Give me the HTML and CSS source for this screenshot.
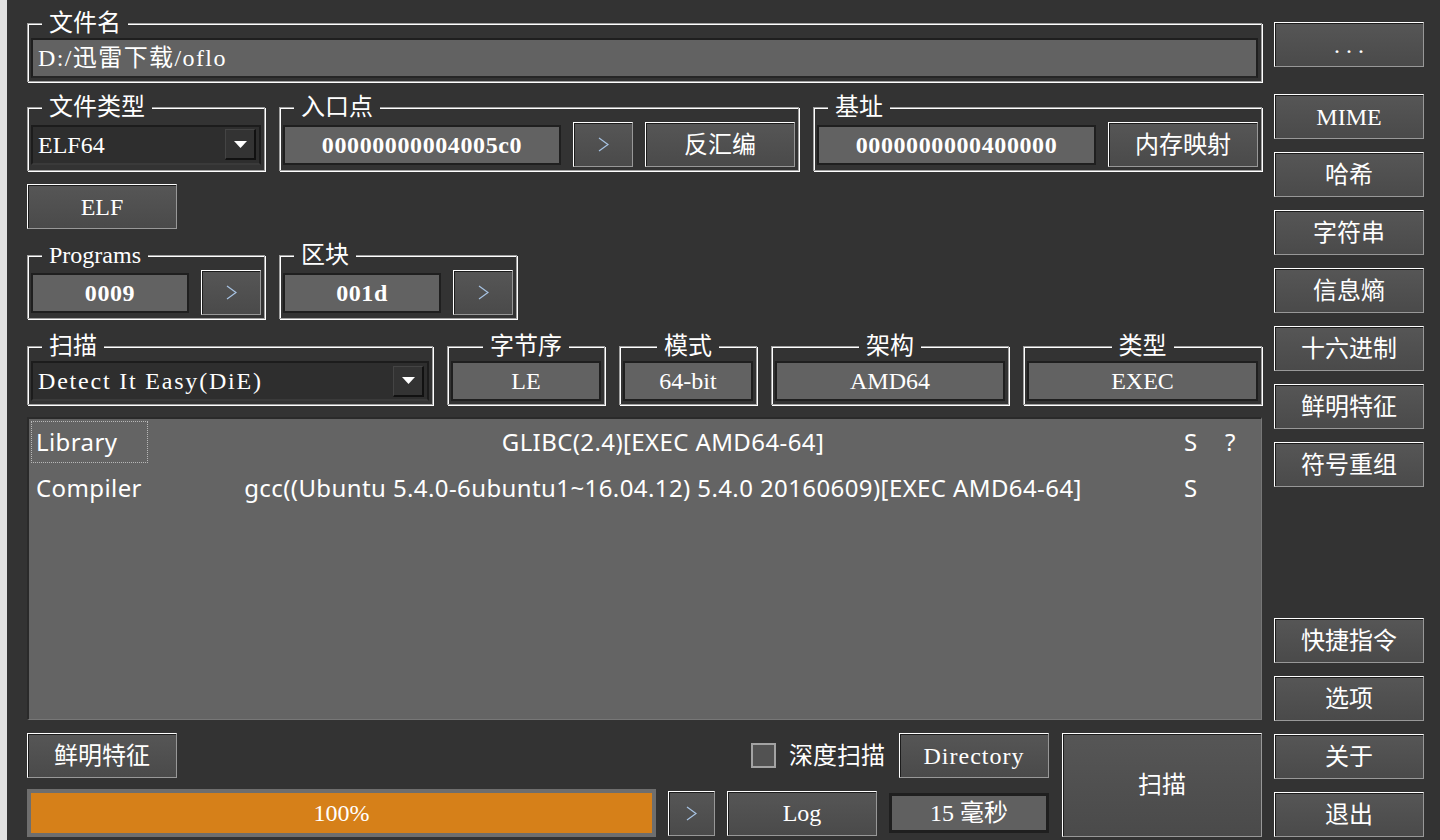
FILE: index.html
```html
<!DOCTYPE html>
<html lang="zh-CN">
<head>
    <meta charset="UTF-8">
    <meta name="viewport" content="width=device-width, initial-scale=1.0">
    <title>Detect It Easy</title>
    <link rel="stylesheet" href="styles.css">
</head>
<body>
    <div class="window">
        <div class="main">
            <div class="group group-file">
                <span class="legend">文件名</span>
                <div class="line-edit">D:/迅雷下载/oflo</div>
            </div>

            <div class="row row-first">
                <div class="group group-type">
                    <span class="legend">文件类型</span>
                    <div class="combo">
                        <span class="combo-text">ELF64</span>
                        <span class="combo-btn"><svg width="13" height="7" viewBox="0 0 13 7"><polygon points="0,0 13,0 6.5,7" fill="#fff"/></svg></span>
                    </div>
                </div>
                <div class="group group-entry">
                    <span class="legend">入口点</span>
                    <div class="field value">00000000004005c0</div>
                    <button class="btn btn-arrow"><svg width="11" height="15" viewBox="0 0 11 15"><polyline points="1,1 10,7.5 1,14" fill="none" stroke="#a8c4e4" stroke-width="1.2"/></svg></button>
                    <button class="btn">反汇编</button>
                </div>
                <div class="group group-grow">
                    <span class="legend">基址</span>
                    <div class="field value">0000000000400000</div>
                    <button class="btn">内存映射</button>
                </div>
            </div>

            <button class="btn btn-elf">ELF</button>

            <div class="row row-programs">
                <div class="group group-type">
                    <span class="legend">Programs</span>
                    <div class="field value">0009</div>
                    <button class="btn btn-arrow"><svg width="11" height="15" viewBox="0 0 11 15"><polyline points="1,1 10,7.5 1,14" fill="none" stroke="#a8c4e4" stroke-width="1.2"/></svg></button>
                </div>
                <div class="group group-type">
                    <span class="legend">区块</span>
                    <div class="field value">001d</div>
                    <button class="btn btn-arrow"><svg width="11" height="15" viewBox="0 0 11 15"><polyline points="1,1 10,7.5 1,14" fill="none" stroke="#a8c4e4" stroke-width="1.2"/></svg></button>
                </div>
            </div>

            <div class="row row-scan">
                <div class="group group-scan">
                    <span class="legend">扫描</span>
                    <div class="combo">
                        <span class="combo-text mono">Detect It Easy(DiE)</span>
                        <span class="combo-btn"><svg width="13" height="7" viewBox="0 0 13 7"><polygon points="0,0 13,0 6.5,7" fill="#fff"/></svg></span>
                    </div>
                </div>
                <div class="group group-endian centered">
                    <span class="legend">字节序</span>
                    <div class="field">LE</div>
                </div>
                <div class="group group-mode centered">
                    <span class="legend">模式</span>
                    <div class="field">64-bit</div>
                </div>
                <div class="group group-arch centered">
                    <span class="legend">架构</span>
                    <div class="field">AMD64</div>
                </div>
                <div class="group group-grow centered">
                    <span class="legend">类型</span>
                    <div class="field">EXEC</div>
                </div>
            </div>

            <div class="list">
                <div class="list-row">
                    <div class="cell cell-type focused">Library</div>
                    <div class="cell cell-name">GLIBC(2.4)[EXEC AMD64-64]</div>
                    <div class="cell cell-s">S</div>
                    <div class="cell cell-q">?</div>
                </div>
                <div class="list-row">
                    <div class="cell cell-type">Compiler</div>
                    <div class="cell cell-name">gcc((Ubuntu 5.4.0-6ubuntu1~16.04.12) 5.4.0 20160609)[EXEC AMD64-64]</div>
                    <div class="cell cell-s">S</div>
                    <div class="cell cell-q"></div>
                </div>
            </div>

            <div class="bottom">
                <div class="bottom-left">
                    <div class="bottom-row">
                        <button class="btn">鲜明特征</button>
                        <label class="check"><span class="check-box"></span>深度扫描</label>
                        <button class="btn btn-dir">Directory</button>
                    </div>
                    <div class="bottom-row">
                        <div class="progress"><div class="progress-bar" style="width: 100%">100%</div></div>
                        <button class="btn btn-arrow btn-arrow-small"><svg width="11" height="15" viewBox="0 0 11 15"><polyline points="1,1 10,7.5 1,14" fill="none" stroke="#a8c4e4" stroke-width="1.2"/></svg></button>
                        <button class="btn">Log</button>
                        <div class="field field-time">15 毫秒</div>
                    </div>
                </div>
                <button class="btn btn-scan">扫描</button>
            </div>
        </div>

        <div class="side">
            <button class="btn btn-dots">...</button>
            <button class="btn">MIME</button>
            <button class="btn">哈希</button>
            <button class="btn">字符串</button>
            <button class="btn">信息熵</button>
            <button class="btn">十六进制</button>
            <button class="btn">鲜明特征</button>
            <button class="btn">符号重组</button>
            <button class="btn btn-shortcuts">快捷指令</button>
            <button class="btn">选项</button>
            <button class="btn">关于</button>
            <button class="btn">退出</button>
        </div>
    </div>
</body>
</html>
```

FILE: styles.css
```css
* {
    box-sizing: border-box;
}
body {
    margin: 0;
    background-color: #333333;
    color: #fff;
    font: 24px/24px "Liberation Serif", "Noto Sans CJK SC", serif;
}
.window {
    display: flex;
    gap: 12px;
    height: 840px;
    padding: 22px 16px 3px 20px;
    border-left: 7px solid #e1e1e1;
}
.main {
    flex: 1;
    display: flex;
    flex-direction: column;
}
.side {
    width: 150px;
    display: flex;
    flex-direction: column;
    gap: 13px;
}

/* etched group frame */
.group {
    position: relative;
    display: flex;
    align-items: center;
    gap: 12px;
    padding: 14px 3px 3px;
    border: 1px solid #a0a0a0;
    box-shadow: inset 1px 1px 0 #fff, 1px 1px 0 #fff;
}
.legend {
    position: absolute;
    top: -13px;
    left: 14px;
    padding: 0 7px;
    background-color: #333333;
    white-space: nowrap;
}
.centered .legend {
    left: 50%;
    transform: translateX(-50%);
}
.row {
    display: flex;
    gap: 14px;
}
.group-file {
    margin-top: 1px;
}
.row-first {
    margin-top: 25px;
}
.btn-elf {
    margin-top: 13px;
}
.row-programs {
    margin-top: 26px;
}
.row-scan {
    margin-top: 27px;
}
.group-type { width: 238px; }
.group-entry { width: 520px; }
.group-scan { width: 406px; }
.group-endian { width: 158px; }
.group-mode { width: 138px; }
.group-arch { width: 238px; }
.group-grow { flex: 1; }

/* buttons */
.btn {
    flex: none;
    width: 150px;
    height: 45px;
    padding: 0;
    border: 1px solid;
    border-color: #fff #989898 #989898 #fff;
    box-shadow: inset 1px 1px 0 #1c1c1c;
    background: linear-gradient(#565656, #4a4a4a);
    color: #fff;
    font: inherit;
    cursor: pointer;
}
.btn svg {
    display: block;
    margin: 0 auto;
}
.btn-arrow {
    width: 60px;
}
.btn-arrow-small {
    width: 47px;
}
.btn-dots {
    margin-bottom: 14px;
    letter-spacing: 6px;
    padding-left: 6px;
}
.btn-shortcuts {
    margin-top: auto;
}

/* sunken fields */
.field {
    flex: 1;
    height: 40px;
    display: flex;
    align-items: center;
    justify-content: center;
    border: 2px solid #1f1f1f;
    background-color: #626262;
    white-space: nowrap;
}
.value {
    font-weight: bold;
    letter-spacing: 0.6px;
}
.line-edit {
    flex: 1;
    height: 40px;
    display: flex;
    align-items: center;
    padding-left: 5px;
    border: 2px solid #1f1f1f;
    border-bottom-color: #262626;
    background-color: #626262;
    letter-spacing: 1.4px;
}
.combo {
    flex: 1;
    height: 40px;
    display: flex;
    align-items: center;
    justify-content: space-between;
    padding: 0 3px 0 5px;
    border: 2px solid #1c1c1c;
    border-bottom-color: #3a3a3a;
    background-color: #2e2e2e;
}
.mono {
    letter-spacing: 1.8px;
}
.combo-btn {
    width: 31px;
    height: 31px;
    display: flex;
    align-items: center;
    justify-content: center;
    border: 1px solid;
    border-color: #444 #111 #111 #444;
    border-width: 1px 2px 2px 1px;
    background-color: #333;
}

/* detection list */
.list {
    flex: 1;
    margin-top: 12px;
    padding: 0 2px;
    border: 2px solid;
    border-color: #2a2a2a #777 #777 #2a2a2a;
    border-width: 2px 1px 1px 2px;
    background-color: #646464;
    font-family: "Noto Sans", sans-serif;
    letter-spacing: 0.4px;
}
.list-row {
    display: grid;
    grid-template-columns: 117px 1030px 36px 1fr;
}
.cell {
    height: 42px;
    margin: 2px 0;
    display: flex;
    align-items: center;
    white-space: nowrap;
}
.cell-type {
    padding-left: 5px;
}
.focused {
    border: 1px dotted #b8b8b8;
    padding-left: 4px;
}
.cell-name {
    justify-content: center;
}
.cell-s {
    padding-left: 6px;
}
.cell-q {
    padding-left: 11px;
}

/* bottom bar */
.bottom {
    display: flex;
    gap: 13px;
    margin-top: 13px;
}
.bottom-left {
    flex: 1;
    display: flex;
    flex-direction: column;
    gap: 11px;
}
.bottom-row {
    display: flex;
    align-items: center;
    gap: 12px;
}
.bottom-row:last-child {
    height: 48px;
}
.check {
    margin-left: auto;
    display: flex;
    align-items: center;
    gap: 13px;
}
.check-box {
    width: 25px;
    height: 25px;
    border: 2px solid #a3a3a3;
    background-color: #525252;
}
.btn-dir {
    margin-left: 2px;
    letter-spacing: 1px;
}
.progress {
    flex: 1;
    height: 48px;
    border: 4px solid #6e6e6e;
    background-color: #505050;
}
.progress-bar {
    height: 100%;
    display: flex;
    align-items: center;
    justify-content: center;
    background-color: #d68019;
}
.field-time {
    flex: none;
    width: 160px;
    border-width: 3px;
    background-color: #606060;
}
.btn-scan {
    width: 200px;
    height: 104px;
}
```
